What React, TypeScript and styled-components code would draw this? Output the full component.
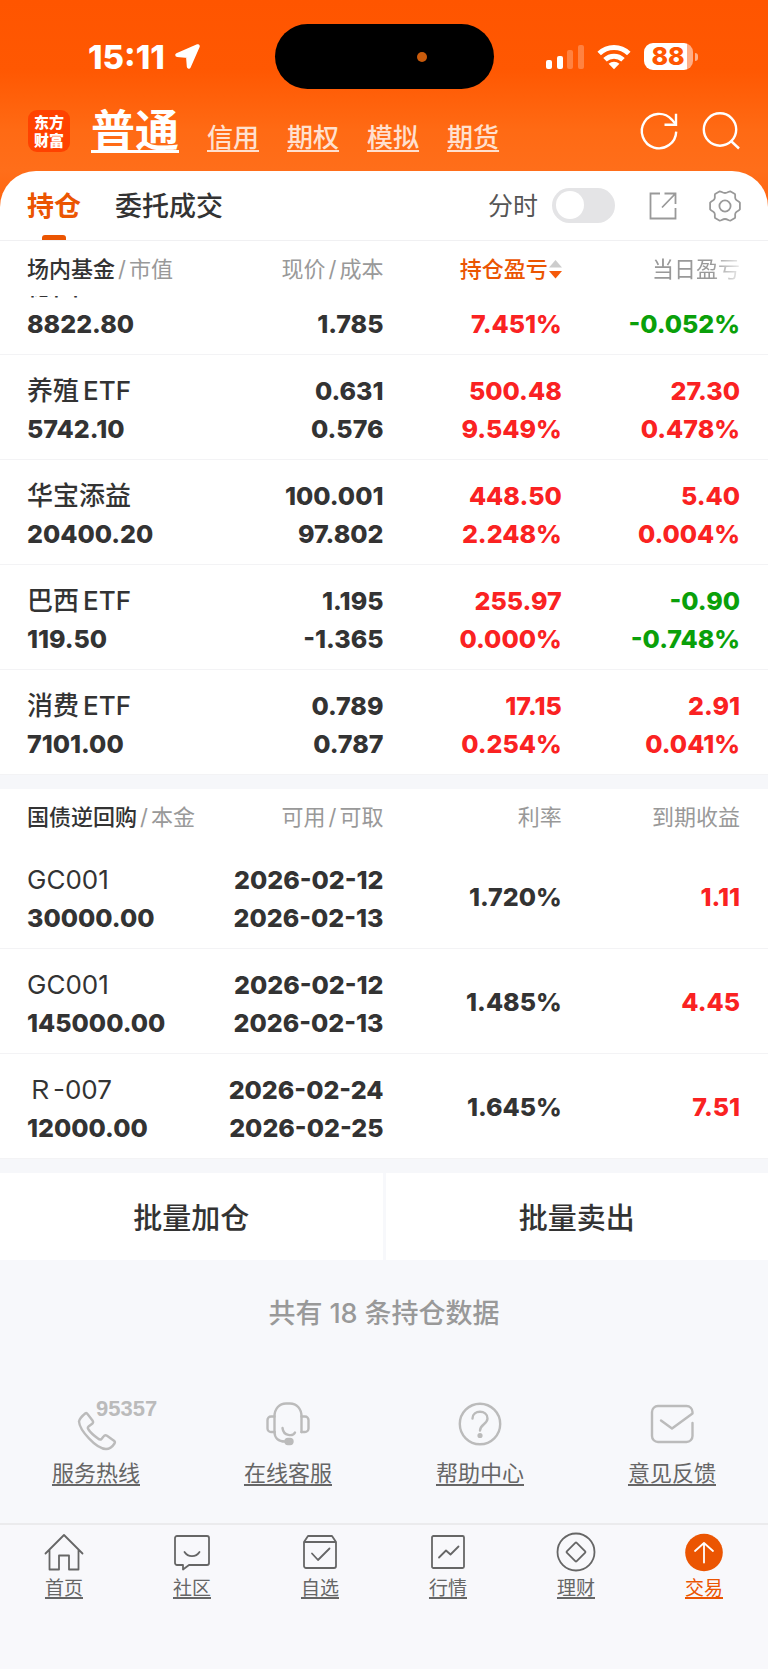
import React from "react";
import styled, { createGlobalStyle } from "styled-components";

const GlobalStyle = createGlobalStyle`
  *, *::before, *::after { box-sizing: border-box; }
  body {
    margin: 0;
    background: #f7f8fb;
    color: #333;
    font-family: Inter, "Noto Sans CJK SC", sans-serif;
  }
  button { font: inherit; color: inherit; background: none; border: 0; padding: 0; cursor: pointer; }
  a { color: inherit; }
  svg { display: block; overflow: visible; flex: none; }
`;

const Page = styled.div`
  display: flex;
  flex-direction: column;
  min-height: 100vh;
`;

const Hero = styled.header`
  background: linear-gradient(180deg, #ff5500 0, #ff5802 70px, #ff6a14 130px, #ff6e1a 170px, #ff6510 206px);
  padding-bottom: 36px;
`;

const StatusBar = styled.div`
  display: grid;
  grid-template-columns: 1fr 219px 1fr;
  align-items: center;
  padding-top: 24px;
  height: 89px;
  color: #fff;
`;

const Clock = styled.div`
  display: flex;
  align-items: center;
  gap: 9px;
  padding-left: 88px;
  font-size: 33px;
  line-height: 36px;
  font-weight: 800;
`;

const Island = styled.div`
  display: flex;
  align-items: center;
  justify-content: flex-end;
  height: 65px;
  padding-right: 67px;
  border-radius: 33px;
  background: #000;
`;

const CameraDot = styled.span`
  width: 10px;
  height: 10px;
  border-radius: 50%;
  background: #c95b0c;
`;

const Signals = styled.div`
  display: flex;
  align-items: center;
  gap: 13px;
  padding-left: 52px;
`;

const Battery = styled.div`
  display: flex;
  align-items: center;
  gap: 2px;
`;

const BatteryBody = styled.span`
  display: flex;
  align-items: center;
  justify-content: center;
  width: 49px;
  height: 27px;
  border-radius: 9px;
  background: linear-gradient(90deg, #fff 0 88%, #ffae87 88%);
  color: #ff5601;
  font-size: 25px;
  line-height: 27px;
  font-weight: 800;
`;

const BatteryTip = styled.span`
  width: 3px;
  height: 8px;
  border-radius: 0 4px 4px 0;
  background: #ffae87;
`;

const AccountBar = styled.div`
  display: flex;
  align-items: flex-end;
  height: 82px;
  padding: 0 28px 7px 28px;
  color: #fff;
`;

const Logo = styled.div`
  display: grid;
  place-content: center;
  width: 42px;
  height: 42px;
  margin: 0 21px 12px 0;
  border-radius: 9px;
  background: #ff4200;
  font-family: "Noto Sans CJK SC", sans-serif;
  font-size: 15px;
  line-height: 18px;
  font-weight: 900;
  text-align: center;
`;

const AccountNav = styled.nav`
  display: flex;
  align-items: baseline;
  gap: 28px;
  flex: 1;
`;

const AccountLink = styled.a<{ $active?: boolean }>`
  font-size: ${(p) => (p.$active ? 44 : 26)}px;
  line-height: 52px;
  font-weight: ${(p) => (p.$active ? 700 : 500)};
  color: ${(p) => (p.$active ? "#fff" : "#ffe0cf")};
  text-decoration-thickness: ${(p) => (p.$active ? 3 : 2)}px;
  text-underline-offset: 3px;
  text-decoration-skip-ink: none;
`;

const HeroActions = styled.div`
  display: flex;
  gap: 24px;
  padding-bottom: 14px;
`;

const Sheet = styled.main`
  display: flex;
  flex-direction: column;
  flex: 1;
  margin-top: -36px;
`;

const Card = styled.section`
  overflow: hidden;
  background: #fff;
  border-radius: 36px 36px 0 0;
`;

const TabBar = styled.div`
  display: flex;
  align-items: center;
  height: 70px;
  padding: 0 27px;
  border-bottom: 1px solid #f0f0f2;
`;

const Tab = styled.button<{ $active?: boolean }>`
  position: relative;
  height: 69px;
  margin-right: 34px;
  padding-top: 3px;
  font-size: 27px;
  line-height: 66px;
  font-weight: ${(p) => (p.$active ? 700 : 500)};
  color: ${(p) => (p.$active ? "#eb5502" : "#333")};
  ${(p) =>
    p.$active &&
    `&::after {
      content: "";
      position: absolute;
      left: 50%;
      bottom: 0;
      width: 24px;
      height: 5px;
      margin-left: -12px;
      border-radius: 3px 3px 0 0;
      background: #eb5502;
    }`}
`;

const TabTools = styled.div`
  display: flex;
  align-items: center;
  margin-left: auto;
`;

const SwitchLabel = styled.label`
  display: flex;
  align-items: center;
  gap: 14px;
  margin-right: 34px;
  color: #555;
  font-size: 25px;
  line-height: 36px;
`;

const Switch = styled.input`
  appearance: none;
  width: 63px;
  height: 35px;
  margin: 0;
  padding: 3px 4px;
  border-radius: 18px;
  background: #e4e4e6;
  cursor: pointer;
  &::before {
    content: "";
    display: block;
    width: 28px;
    height: 28px;
    border-radius: 50%;
    background: #fff;
  }
  &:checked { background: #eb5502; }
  &:checked::before { margin-left: auto; }
`;

const ToolButton = styled.button`
  & + & { margin-left: 32px; }
`;

const Table = styled.table`
  display: block;
  background: #fff;
`;

const Head = styled.thead`
  display: block;
  padding: 0 28px 0 27px;
`;

const HeadRow = styled.tr`
  display: grid;
  grid-template-columns: repeat(4, 1fr);
  align-items: center;
  height: 55px;
`;

const HeadCell = styled.th<{ $tone?: "accent" | "fade" }>`
  display: flex;
  align-items: center;
  justify-content: flex-end;
  padding: 0;
  font-size: 22px;
  line-height: 32px;
  font-weight: ${(p) => (p.$tone === "accent" ? 500 : 400)};
  white-space: nowrap;
  color: ${(p) => (p.$tone === "accent" ? "#eb5502" : "#999")};
  ${(p) => p.$tone === "fade" && "mask-image: linear-gradient(90deg, #000 calc(100% - 28px), rgba(0,0,0,.2));"}
  &:first-child { justify-content: flex-start; }
`;

const HeadTitle = styled.span`
  font-weight: 500;
  color: #333;
`;

const Slash = styled.span`
  margin: 0 3px;
`;

const Row = styled.tr`
  display: grid;
  grid-template-columns: repeat(4, 1fr);
  align-items: center;
  padding: 17px 28px 11px 27px;
  border-bottom: 1px solid #f3f3f5;
`;

/* The holdings list is scrolled, so its first row is cut by the header. */
const Body = styled.tbody<{ $scrolled?: boolean }>`
  display: block;
  overflow: hidden;
  ${Row}:first-child { margin-top: ${(p) => (p.$scrolled ? -46 : 0)}px; }
`;

type Tone = "up" | "down" | "plain";
const tones: Record<Tone, string> = { up: "#fa2222", down: "#0aa00a", plain: "#333" };

const Cell = styled.td<{ $tone?: Tone; $single?: boolean }>`
  display: flex;
  flex-direction: column;
  align-items: flex-end;
  padding: 0 0 ${(p) => (p.$single ? 4 : 0)}px;
  font-size: 25px;
  line-height: 38px;
  font-weight: 800;
  white-space: nowrap;
  color: ${(p) => tones[p.$tone ?? "plain"]};
  &:first-child { align-items: flex-start; }
`;

const Line = styled.span`
  height: 38px;
`;

const Name = styled.span<{ $code?: boolean }>`
  display: flex;
  gap: 4px;
  height: 38px;
  font-size: 26px;
  font-weight: ${(p) => (p.$code ? 400 : 500)};
`;

const Spacer = styled.div`
  height: 14px;
  background: #f6f7fa;
`;

const BulkActions = styled.div`
  display: grid;
  grid-template-columns: 1fr 1fr;
  gap: 3px;
`;

const BulkButton = styled.button`
  height: 87px;
  padding-top: 4px;
  background: #fff;
  font-size: 29px;
  line-height: 40px;
  font-weight: 500;
`;

const Summary = styled.p`
  display: flex;
  justify-content: center;
  gap: 7px;
  margin: 34px 0 0;
  color: #999;
  font-size: 27px;
  line-height: 40px;
  font-weight: 500;
`;

const HelpLinks = styled.nav`
  display: grid;
  grid-template-columns: repeat(4, 1fr);
  padding: 67px 0 33px;
`;

const HelpLink = styled.a`
  display: flex;
  flex-direction: column;
  align-items: center;
  gap: 9px;
  color: #666;
  font-size: 22px;
  line-height: 34px;
  text-decoration-thickness: 2px;
  text-underline-offset: 3px;
  text-decoration-skip-ink: none;
`;

const HelpIcon = styled.span`
  display: flex;
  position: relative;
  color: #bbb;
`;

const Hotline = styled.span`
  position: absolute;
  left: 23px;
  top: -4px;
  font-family: "Liberation Sans", Arial, sans-serif;
  font-size: 22px;
  line-height: 24px;
  font-weight: 700;
`;

const BottomNav = styled.nav`
  display: grid;
  grid-template-columns: repeat(6, 1fr);
  flex: 1;
  align-content: start;
  min-height: 140px;
  padding-top: 7px;
  border-top: 2px solid #ebebed;
  background: #f8f8fb;
`;

const NavItem = styled.a<{ $active?: boolean }>`
  display: flex;
  flex-direction: column;
  align-items: center;
  gap: 3px;
  color: ${(p) => (p.$active ? "#eb5502" : "#666")};
  font-size: 19px;
  line-height: 28px;
  text-decoration-thickness: 2px;
  text-underline-offset: 2px;
  text-decoration-skip-ink: none;
`;

const LocationIcon = () => (
  <svg width="27" height="27" viewBox="0 0 27 27" fill="#fff" stroke="#fff" strokeWidth="4" strokeLinejoin="round">
    <path d="M23.8 3.2 14.8 23.6 14 13 3.2 12Z" />
  </svg>
);

const CellularIcon = () => (
  <svg width="38" height="26" viewBox="0 0 38 26" fill="#fff">
    <rect x="0" y="16" width="6" height="9" rx="2" />
    <rect x="11" y="12" width="6" height="13" rx="2" />
    <rect x="21" y="6" width="6" height="19" rx="2" opacity=".25" />
    <rect x="32" y="1" width="6" height="24" rx="2" opacity=".25" />
  </svg>
);

const WifiIcon = () => (
  <svg width="34" height="26" viewBox="0 0 34 26" fill="none" stroke="#fff" strokeWidth="5">
    <path d="M2.2 9.5a21 21 0 0 1 29.6 0" />
    <path d="M8 15.8a13 13 0 0 1 18 0" />
    <path d="M17 25.2 11.6 19.8a8 8 0 0 1 10.8 0Z" fill="#fff" stroke="none" />
  </svg>
);

const RefreshIcon = () => (
  <svg width="38" height="38" viewBox="0 0 38 38" fill="none" stroke="#fff" strokeWidth="2.4">
    <path d="M36.2 19.6A17.2 17.2 0 1 1 31.8 7.6L36 12.6" />
    <path d="M36 1.8V12.8H24.5" />
  </svg>
);

const SearchIcon = () => (
  <svg width="38" height="38" viewBox="0 0 38 38" fill="none" stroke="#fff" strokeWidth="2.4">
    <circle cx="18" cy="17.5" r="16.2" />
    <path d="M29 29 37 36.5" />
  </svg>
);

const ShareIcon = () => (
  <svg width="28" height="28" viewBox="0 0 28 28" fill="none" stroke="#999" strokeWidth="1.8">
    <path d="M11 1.5H1.5v25h25V16M15.5 1.5h11V12M26.5 1.5 13 15.5" />
  </svg>
);

const GearIcon = () => (
  <svg width="32" height="32" viewBox="0 0 32 32" fill="none" stroke="#999" strokeWidth="1.8" strokeLinejoin="round">
    <path d="M10.8 1.3c1.6 0 2.6 1.7 5.2 1.7s3.6-1.7 5.2-1.7l4.7 2.7c.9 1.6-.5 3 .7 5.1s3.2 1.700 4.300 3.600v6.600c-1.100 1.900-3.100 1.500-4.300 3.600s.2 3.500-.7 5.100l-4.700 2.700c-1.600 0-2.600-1.700-5.200-1.700s-3.600 1.700-5.200 1.700l-4.700-2.700c-.9-1.600.5-3-.7-5.100s-3.200-1.700-4.300-3.600v-6.600c1.100-1.900 3.100-1.500 4.300-3.600s-.2-3.500.7-5.100Z" />
    <circle cx="16" cy="16" r="5.600" />
  </svg>
);

const SortIcon = () => (
  <svg width="14" height="20" viewBox="0 0 14 20">
    <path d="M7.5 1 14 8.500H1Z" fill="#ccc" />
    <path d="M7.5 19.500 14 12H1Z" fill="#f55a0a" />
  </svg>
);

const HelpGlyph = ({ children }: { children: React.ReactNode }) => (
  <svg width="46" height="46" viewBox="0 0 46 46" fill="none" stroke="currentColor" strokeWidth="2.4" strokeLinecap="round" strokeLinejoin="round">
    {children}
  </svg>
);

const NavGlyph = ({ children }: { children: React.ReactNode }) => (
  <svg width="40" height="40" viewBox="0 0 40 40" fill="none" stroke="currentColor" strokeWidth="1.8" strokeLinecap="round" strokeLinejoin="round">
    {children}
  </svg>
);

interface Holding {
  name: string;
  suffix?: string;
  value: string;
  price: string[];
  total: string[];
  day: string[];
  dayTone: Tone;
}

const holdings: Holding[] = [
  { name: "德国", value: "8822.80", price: ["", "1.785"], total: ["", "7.451%"], day: ["", "-0.052%"], dayTone: "down" },
  { name: "养殖", suffix: "ETF", value: "5742.10", price: ["0.631", "0.576"], total: ["500.48", "9.549%"], day: ["27.30", "0.478%"], dayTone: "up" },
  { name: "华宝添益", value: "20400.20", price: ["100.001", "97.802"], total: ["448.50", "2.248%"], day: ["5.40", "0.004%"], dayTone: "up" },
  { name: "巴西", suffix: "ETF", value: "119.50", price: ["1.195", "-1.365"], total: ["255.97", "0.000%"], day: ["-0.90", "-0.748%"], dayTone: "down" },
  { name: "消费", suffix: "ETF", value: "7101.00", price: ["0.789", "0.787"], total: ["17.15", "0.254%"], day: ["2.91", "0.041%"], dayTone: "up" },
];

const repos = [
  { code: "GC001", principal: "30000.00", dates: ["2026-02-12", "2026-02-13"], rate: "1.720%", income: "1.11" },
  { code: "GC001", principal: "145000.00", dates: ["2026-02-12", "2026-02-13"], rate: "1.485%", income: "4.45" },
  { code: "Ｒ-007", principal: "12000.00", dates: ["2026-02-24", "2026-02-25"], rate: "1.645%", income: "7.51" },
];

const helpItems = [
  {
    label: "服务热线",
    extra: "95357",
    icon: <path d="M12.5 12.2Q6.5 17 6 20.5C6.5 29 23 48 33 48Q38 48 41.5 42.5Q42.5 41 41 39.8L34 34.8Q32 33.5 30.5 35.5L28.5 38Q27 39.3 25 37.5Q18 32.5 15.5 28.5Q14.2 26.8 15.5 25.5L19.5 22.5Q20.7 21.2 19.5 19.5L14.5 13Q13.5 11.5 12.5 12.2Z" />,
  },
  {
    label: "在线客服",
    icon: (
      <>
        <path d="M9.5 31V15.5c0-8 5-13 11.5-13h4c6.5 0 11.5 5 11.5 13V31" />
        <path d="M9.5 15.5H6A3.5 3.5 0 0 0 2.5 19v8.5A3.5 3.5 0 0 0 6 31h3.5M36.5 15.5H40a3.5 3.5 0 0 1 3.5 3.5v8.5A3.5 3.5 0 0 1 40 31h-3.5" />
        <path d="M9.5 31c0 6 4 9.5 10.5 9.5M17.5 27c1 8.5 10.5 8.5 12.5 4.5" />
        <rect x="20.5" y="38" width="7" height="5" rx="2.5" fill="currentColor" />
      </>
    ),
  },
  {
    label: "帮助中心",
    icon: (
      <>
        <circle cx="23" cy="23" r="20.2" />
        <path d="M15.5 17.5c0-9 15-9 15 0 0 5.5-7.5 6-7.5 12" />
        <circle cx="23" cy="34.5" r="1.4" fill="currentColor" />
      </>
    ),
  },
  {
    label: "意见反馈",
    icon: <path d="M43.5 22V35a6 6 0 0 1-6 6H9a6 6 0 0 1-6-6V11a6 6 0 0 1 6-6h28.5a6 6 0 0 1 6 6v1.5L23 27.5 12 19.5" />,
  },
];

const navItems = [
  { label: "首页", icon: <path d="m1.5 21.5 18.5-18.5 18.5 18.5M5.5 18v19.5h9.5v-14h10v14h9.5V18" /> },
  {
    label: "社区",
    icon: <path d="M5 4h30a2 2 0 0 1 2 2v25a2 2 0 0 1-2 2H17l-6 4.500V33H5a2 2 0 0 1-2-2V6a2 2 0 0 1 2-2ZM12.500 20c3.500 5.500 11.500 5.500 15 0" />,
  },
  {
    label: "自选",
    icon: <path d="M4 10 8 4h24l4 6v24a2 2 0 0 1-2 2H6a2 2 0 0 1-2-2ZM4 10h32M12 21.500l6 6.500L29.500 16.500" />,
  },
  {
    label: "行情",
    icon: (
      <>
        <rect x="4" y="4" width="32" height="32" rx="1.5" />
        <path d="m11 25.500 7-7 4.500 4 8-8" />
      </>
    ),
  },
  {
    label: "理财",
    icon: (
      <>
        <circle cx="20" cy="20" r="18.5" />
        <rect x="13" y="13" width="14" height="14" rx="1" transform="rotate(45 20 20)" />
      </>
    ),
  },
  {
    label: "交易",
    active: true,
    icon: (
      <>
        <circle cx="20" cy="20.5" r="18.8" fill="currentColor" stroke="none" />
        <path d="M20 30.500V11M11 19l9-8 9 8" stroke="#fff" />
      </>
    ),
  },
];

const Pair = ({ lines }: { lines: string[] }) => (
  <>
    {lines.map((text, i) => (
      <Line key={i}>{text}</Line>
    ))}
  </>
);

export default function App() {
  return (
    <Page>
      <GlobalStyle />
      <Hero>
        <StatusBar>
          <Clock>
            15:11
            <LocationIcon />
          </Clock>
          <Island>
            <CameraDot />
          </Island>
          <Signals>
            <CellularIcon />
            <WifiIcon />
            <Battery>
              <BatteryBody>88</BatteryBody>
              <BatteryTip />
            </Battery>
          </Signals>
        </StatusBar>
        <AccountBar>
          <Logo>
            <span>东方</span>
            <span>财富</span>
          </Logo>
          <AccountNav>
            <AccountLink href="#normal" $active>普通</AccountLink>
            <AccountLink href="#credit">信用</AccountLink>
            <AccountLink href="#options">期权</AccountLink>
            <AccountLink href="#paper">模拟</AccountLink>
            <AccountLink href="#futures">期货</AccountLink>
          </AccountNav>
          <HeroActions>
            <button aria-label="刷新"><RefreshIcon /></button>
            <button aria-label="搜索"><SearchIcon /></button>
          </HeroActions>
        </AccountBar>
      </Hero>

      <Sheet>
        <Card>
          <TabBar>
            <Tab $active>持仓</Tab>
            <Tab>委托成交</Tab>
            <TabTools>
              <SwitchLabel>
                分时
                <Switch type="checkbox" role="switch" />
              </SwitchLabel>
              <ToolButton aria-label="分享"><ShareIcon /></ToolButton>
              <ToolButton aria-label="设置"><GearIcon /></ToolButton>
            </TabTools>
          </TabBar>
          <Table>
            <Head>
              <HeadRow>
                <HeadCell><HeadTitle>场内基金</HeadTitle><Slash>/</Slash>市值</HeadCell>
                <HeadCell>现价<Slash>/</Slash>成本</HeadCell>
                <HeadCell $tone="accent">持仓盈亏<SortIcon /></HeadCell>
                <HeadCell $tone="fade">当日盈亏</HeadCell>
              </HeadRow>
            </Head>
            <Body $scrolled>
              {holdings.map((h) => (
                <Row key={h.name}>
                  <Cell>
                    <Name>{h.name}{h.suffix && <span>{h.suffix}</span>}</Name>
                    <Line>{h.value}</Line>
                  </Cell>
                  <Cell><Pair lines={h.price} /></Cell>
                  <Cell $tone="up"><Pair lines={h.total} /></Cell>
                  <Cell $tone={h.dayTone}><Pair lines={h.day} /></Cell>
                </Row>
              ))}
            </Body>
          </Table>
        </Card>
        <Spacer />
        <Table>
          <Head>
            <HeadRow>
              <HeadCell><HeadTitle>国债逆回购</HeadTitle><Slash>/</Slash>本金</HeadCell>
              <HeadCell>可用<Slash>/</Slash>可取</HeadCell>
              <HeadCell>利率</HeadCell>
              <HeadCell>到期收益</HeadCell>
            </HeadRow>
          </Head>
          <Body>
            {repos.map((r, i) => (
              <Row key={i}>
                <Cell><Name $code>{r.code}</Name><Line>{r.principal}</Line></Cell>
                <Cell><Pair lines={r.dates} /></Cell>
                <Cell $single>{r.rate}</Cell>
                <Cell $single $tone="up">{r.income}</Cell>
              </Row>
            ))}
          </Body>
        </Table>
        <Spacer />
        <BulkActions>
          <BulkButton>批量加仓</BulkButton>
          <BulkButton>批量卖出</BulkButton>
        </BulkActions>
        <Summary><span>共有</span><span>18</span><span>条持仓数据</span></Summary>
        <HelpLinks>
          {helpItems.map((item) => (
            <HelpLink key={item.label} href="#help">
              <HelpIcon>
                <HelpGlyph>{item.icon}</HelpGlyph>
                {item.extra && <Hotline>{item.extra}</Hotline>}
              </HelpIcon>
              <span>{item.label}</span>
            </HelpLink>
          ))}
        </HelpLinks>
        <BottomNav>
          {navItems.map((item) => (
            <NavItem key={item.label} href="#nav" $active={item.active}>
              <NavGlyph>{item.icon}</NavGlyph>
              <span>{item.label}</span>
            </NavItem>
          ))}
        </BottomNav>
      </Sheet>
    </Page>
  );
}
